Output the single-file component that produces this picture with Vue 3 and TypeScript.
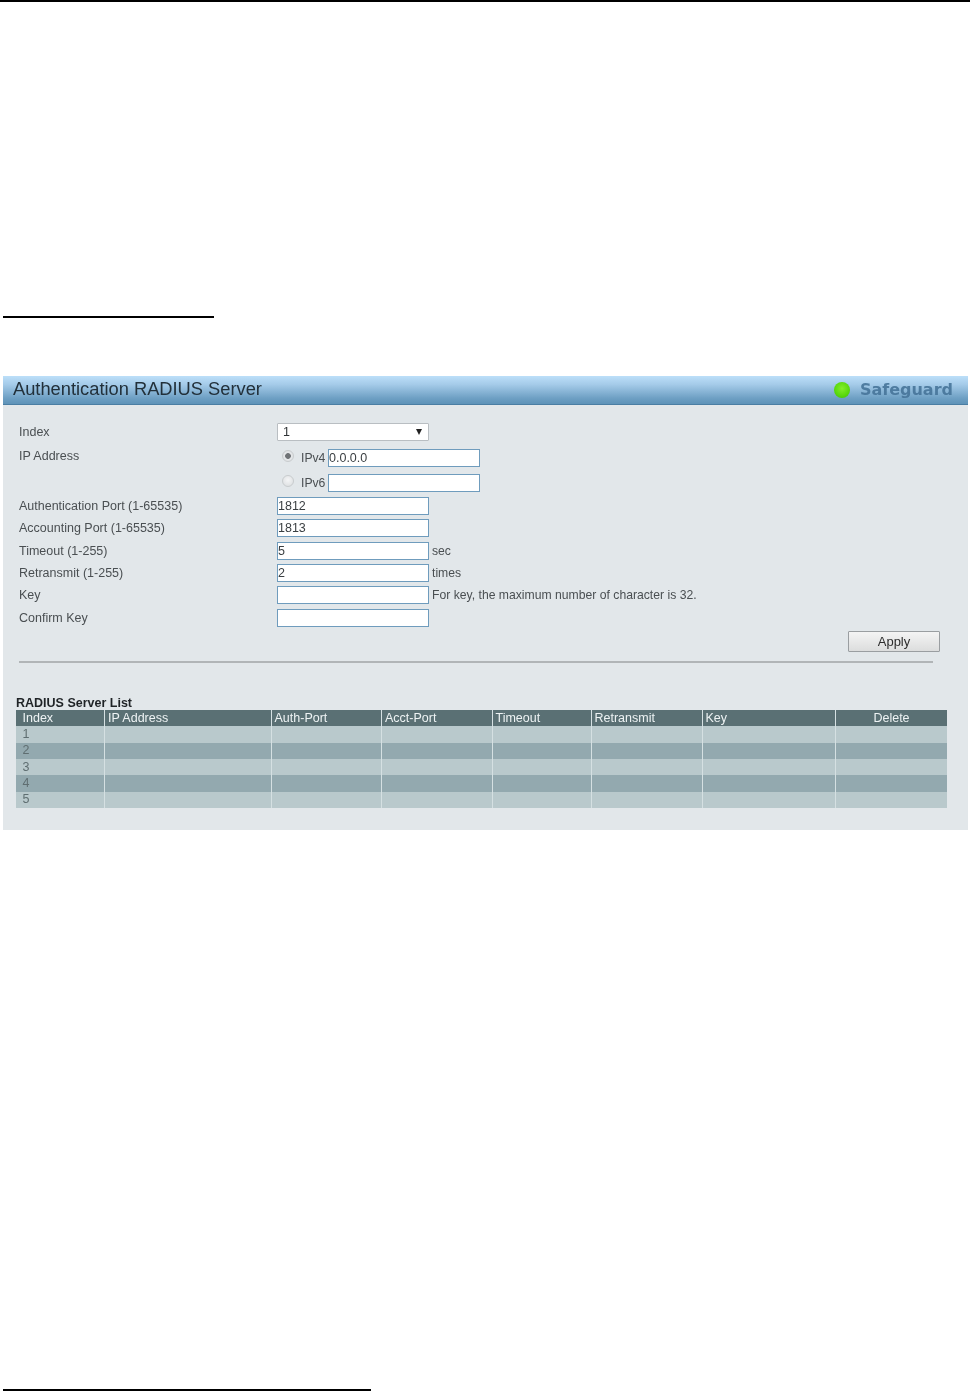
<script setup lang="ts">
interface Field {
  label: string
  value: string
  note?: string
}

const fields: Field[] = [
  { label: 'Authentication Port (1-65535)', value: '1812' },
  { label: 'Accounting Port (1-65535)', value: '1813' },
  { label: 'Timeout (1-255)', value: '5', note: 'sec' },
  { label: 'Retransmit (1-255)', value: '2', note: 'times' },
  { label: 'Key', value: '', note: 'For key, the maximum number of character is 32.' },
  { label: 'Confirm Key', value: '' },
]

const columns: string[] = ['Index', 'IP Address', 'Auth-Port', 'Acct-Port', 'Timeout', 'Retransmit', 'Key', 'Delete']
const colWidths: number[] = [88.5, 166.5, 110.5, 110.5, 99, 111, 133.5, 111.5]
const rows: number[] = [1, 2, 3, 4, 5]
</script>

<template>
  <div class="page">
    <div class="rule top-rule"></div>
    <div class="rule heading-rule"></div>

    <section class="panel">
      <header class="titlebar">
        <h1 class="title">Authentication RADIUS Server</h1>
        <div class="safeguard">
          <span class="led"></span>
          <span class="safeguard-text">Safeguard</span>
        </div>
      </header>

      <div class="body">
        <div class="row row-select">
          <span class="label">Index</span>
          <div class="select">
            <span>1</span>
            <span class="arrow"></span>
          </div>
        </div>

        <div class="row row-ip4">
          <span class="label label-ip">IP Address</span>
          <div class="ip-cell">
            <input class="radio" type="radio" name="ip" checked />
            <span class="ip-name">IPv4</span>
            <input class="text" type="text" value="0.0.0.0" />
          </div>
        </div>

        <div class="row row-ip6">
          <span class="label"></span>
          <div class="ip-cell">
            <input class="radio" type="radio" name="ip" />
            <span class="ip-name">IPv6</span>
            <input class="text" type="text" value="" />
          </div>
        </div>

        <div v-for="f in fields" :key="f.label" class="row">
          <span class="label">{{ f.label }}</span>
          <input class="text" type="text" :value="f.value" />
          <span v-if="f.note" class="note">{{ f.note }}</span>
        </div>

        <div class="actions">
          <button class="apply" type="button">Apply</button>
        </div>

        <div class="divider"></div>

        <h2 class="list-title">RADIUS Server List</h2>
        <table class="list">
          <colgroup>
            <col v-for="(w, i) in colWidths" :key="i" :style="{ width: w + 'px' }" />
          </colgroup>
          <thead>
            <tr>
              <th v-for="c in columns" :key="c" :class="{ center: c === 'Delete', first: c === 'Index' }">{{ c }}</th>
            </tr>
          </thead>
          <tbody>
            <tr v-for="r in rows" :key="r" :class="r % 2 ? 'odd' : 'even'">
              <td class="first">{{ r }}</td>
              <td v-for="n in 7" :key="n"></td>
            </tr>
          </tbody>
        </table>
      </div>
    </section>

    <div class="rule footer-rule"></div>
  </div>
</template>

<style>
html, body { background: #ffffff; }
</style>

<style scoped>
.page {
  height: 1391px;
  display: flex;
  flex-direction: column;
  overflow: hidden;
  font-family: "Liberation Sans", Arial, sans-serif;
  font-size: 12.5px;
  color: #4a4f52;
  background: #fff;
}
.rule { background: #000; height: 2px; flex: none; }
.top-rule { width: 100%; }
.heading-rule { width: 211px; margin: 314px 0 0 3px; }
.footer-rule { width: 368px; margin: 559px 0 0 3px; }

.panel {
  margin: 58px 2px 0 3px;
  height: 454px;
  background: #e2e7ea;
  flex: none;
  filter: blur(0.35px);
}
.titlebar {
  height: 29px;
  box-sizing: border-box;
  display: flex;
  align-items: center;
  justify-content: space-between;
  padding: 0 15px 2px 10px;
  background: linear-gradient(#bcdff9 0%, #a5cbe9 30%, #6d9fc3 80%, #5e93b8 100%);
  border-bottom: 1px solid #4a7ea3;
}
.title {
  margin: 0;
  font-size: 18.3px;
  font-weight: 400;
  color: #22303a;
}
.safeguard { display: flex; align-items: center; gap: 10px; margin-top: 2px; }
.led {
  width: 16px;
  height: 16px;
  border-radius: 50%;
  background: radial-gradient(circle at 50% 40%, #84ee2c 0%, #58d80c 60%, #3fb808 100%);
}
.safeguard-text {
  font-family: "DejaVu Sans", Verdana, sans-serif;
  font-size: 16px;
  line-height: 16px;
  font-weight: 700;
  color: #47759a;
  opacity: 0.9;
}

.body { padding: 18px 21px 22px 13px; }
.row {
  display: flex;
  align-items: flex-start;
  height: 22.35px;
  padding-left: 3px;
}
.row-select { height: 26px; }
.row-ip4 { height: 25px; }
.row-ip6 { height: 23px; }
.label {
  width: 258px;
  flex: none;
  line-height: 18px;
}
.label-ip { margin-top: -2px; }
.text {
  box-sizing: border-box;
  width: 152px;
  height: 18px;
  margin: 0;
  padding: 0;
  border: 1px solid #6f9cbd;
  border-radius: 0;
  background: #fff;
  font: 12.5px "Liberation Sans", Arial, sans-serif;
  color: #3a3f42;
  outline: none;
}
.note { margin-left: 3px; line-height: 18px; font-size: 12.2px; }
.select {
  box-sizing: border-box;
  width: 152px;
  height: 18px;
  display: flex;
  align-items: center;
  justify-content: space-between;
  padding: 0 6px 0 5px;
  background: #fff;
  border: 1px solid #b9bec2;
  border-radius: 1px;
  color: #2f3336;
}
.arrow {
  width: 0;
  height: 0;
  border-left: 3px solid transparent;
  border-right: 3px solid transparent;
  border-top: 6px solid #222;
}
.ip-cell { display: flex; align-items: flex-start; }
.radio {
  appearance: none;
  flex: none;
  width: 12px;
  height: 12px;
  margin: 1px 7px 0 5px;
  border: 1px solid #c8ccce;
  border-radius: 50%;
  box-sizing: border-box;
  background: radial-gradient(circle at 50% 40%, #f4f5f6 0%, #d9dcde 100%);
}
.radio:checked {
  background: radial-gradient(circle, #6f7376 0 2.5px, #e6e8ea 3.2px, #d9dcde 100%);
}
.ip-name { width: 27px; line-height: 18px; font-size: 12.2px; }

.actions {
  display: flex;
  justify-content: flex-end;
  margin-right: 7px;
}
.apply {
  box-sizing: border-box;
  width: 92px;
  height: 21px;
  padding: 0;
  border: 1px solid #9a9ea1;
  border-radius: 1px;
  background: linear-gradient(#f4f4f4, #dcdddd);
  font: 13px "Liberation Sans", Arial, sans-serif;
  color: #2c2c2c;
}
.divider {
  height: 2px;
  margin: 9px 14px 0 3px;
  background: #b1b5b7;
}
.list-title {
  margin: 33px 0 0;
  height: 14px;
  font-size: 12.5px;
  line-height: 14px;
  font-weight: 700;
  color: #1f2326;
}
.list {
  width: 931px;
  table-layout: fixed;
  border-collapse: collapse;
}
.list tr { height: 16.3px; }
.list th, .list td {
  box-sizing: border-box;
  height: 16.3px;
  padding: 0 0 0 3px;
  border-left: 1px solid #d5e0e2;
  font-size: 12.5px;
  line-height: 15px;
  text-align: left;
  font-weight: 400;
  overflow: hidden;
}
.list th:first-child, .list td:first-child { border-left: 0; }
.list th {
  background: #5a7074;
  color: #eef3f4;
}
.list .first { padding-left: 6.5px; }
.list th.center { text-align: center; padding: 0; }
.list td { color: #5f6e71; }
.odd td { background: #b9c9cc; }
.even td { background: #93a9af; }
</style>
